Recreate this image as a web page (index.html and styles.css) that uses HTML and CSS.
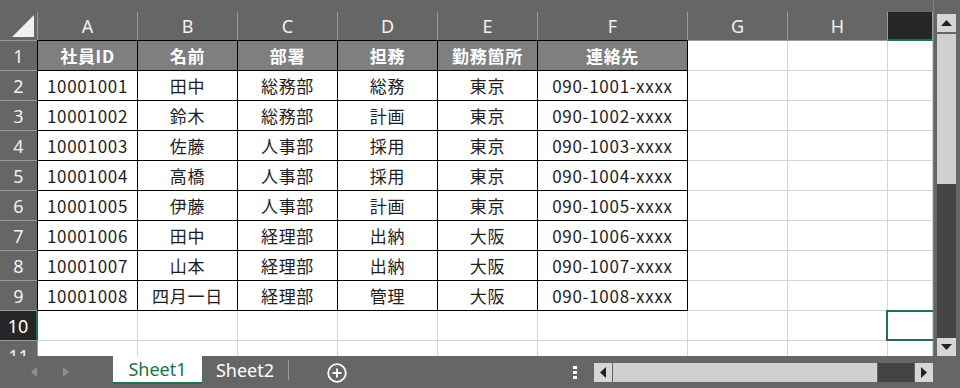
FILE: index.html
```html
<!DOCTYPE html>
<html lang="ja">
<head>
  <meta charset="UTF-8" />
  <title>Book1 - Excel</title>
  <link rel="stylesheet" href="styles.css">
</head>
<body>

<div class="excel">
  <div class="main">
    <div class="sheet">
      <!-- column headers -->
      <div class="corner"><svg width="22" height="22" viewBox="0 0 22 22"><polygon points="22,0 22,22 0,22" fill="#f0f0f0"/></svg></div>
      <div class="ch">A</div>
      <div class="ch">B</div>
      <div class="ch">C</div>
      <div class="ch">D</div>
      <div class="ch">E</div>
      <div class="ch">F</div>
      <div class="ch">G</div>
      <div class="ch">H</div>
      <div class="ch sel"></div>

      <div class="rh">1</div>
      <div class="cell t hd a">社員ID</div>
      <div class="cell t hd">名前</div>
      <div class="cell t hd">部署</div>
      <div class="cell t hd">担務</div>
      <div class="cell t hd">勤務箇所</div>
      <div class="cell t hd">連絡先</div>
      <div class="cell"></div>
      <div class="cell"></div>
      <div class="cell"></div>

      <div class="rh">2</div>
      <div class="cell t a">10001001</div>
      <div class="cell t">田中</div>
      <div class="cell t">総務部</div>
      <div class="cell t">総務</div>
      <div class="cell t">東京</div>
      <div class="cell t">090-1001-xxxx</div>
      <div class="cell"></div>
      <div class="cell"></div>
      <div class="cell"></div>

      <div class="rh">3</div>
      <div class="cell t a">10001002</div>
      <div class="cell t">鈴木</div>
      <div class="cell t">総務部</div>
      <div class="cell t">計画</div>
      <div class="cell t">東京</div>
      <div class="cell t">090-1002-xxxx</div>
      <div class="cell"></div>
      <div class="cell"></div>
      <div class="cell"></div>

      <div class="rh">4</div>
      <div class="cell t a">10001003</div>
      <div class="cell t">佐藤</div>
      <div class="cell t">人事部</div>
      <div class="cell t">採用</div>
      <div class="cell t">東京</div>
      <div class="cell t">090-1003-xxxx</div>
      <div class="cell"></div>
      <div class="cell"></div>
      <div class="cell"></div>

      <div class="rh">5</div>
      <div class="cell t a">10001004</div>
      <div class="cell t">高橋</div>
      <div class="cell t">人事部</div>
      <div class="cell t">採用</div>
      <div class="cell t">東京</div>
      <div class="cell t">090-1004-xxxx</div>
      <div class="cell"></div>
      <div class="cell"></div>
      <div class="cell"></div>

      <div class="rh">6</div>
      <div class="cell t a">10001005</div>
      <div class="cell t">伊藤</div>
      <div class="cell t">人事部</div>
      <div class="cell t">計画</div>
      <div class="cell t">東京</div>
      <div class="cell t">090-1005-xxxx</div>
      <div class="cell"></div>
      <div class="cell"></div>
      <div class="cell"></div>

      <div class="rh">7</div>
      <div class="cell t a">10001006</div>
      <div class="cell t">田中</div>
      <div class="cell t">経理部</div>
      <div class="cell t">出納</div>
      <div class="cell t">大阪</div>
      <div class="cell t">090-1006-xxxx</div>
      <div class="cell"></div>
      <div class="cell"></div>
      <div class="cell"></div>

      <div class="rh">8</div>
      <div class="cell t a">10001007</div>
      <div class="cell t">山本</div>
      <div class="cell t">経理部</div>
      <div class="cell t">出納</div>
      <div class="cell t">大阪</div>
      <div class="cell t">090-1007-xxxx</div>
      <div class="cell"></div>
      <div class="cell"></div>
      <div class="cell"></div>

      <div class="rh">9</div>
      <div class="cell t a">10001008</div>
      <div class="cell t">四月一日</div>
      <div class="cell t">経理部</div>
      <div class="cell t">管理</div>
      <div class="cell t">大阪</div>
      <div class="cell t">090-1008-xxxx</div>
      <div class="cell"></div>
      <div class="cell"></div>
      <div class="cell"></div>

      <div class="rh sel-row">10</div>
      <div class="cell"></div>
      <div class="cell"></div>
      <div class="cell"></div>
      <div class="cell"></div>
      <div class="cell"></div>
      <div class="cell"></div>
      <div class="cell"></div>
      <div class="cell"></div>
      <div class="cell active"></div>

      <div class="rh">11</div>
      <div class="cell"></div>
      <div class="cell"></div>
      <div class="cell"></div>
      <div class="cell"></div>
      <div class="cell"></div>
      <div class="cell"></div>
      <div class="cell"></div>
      <div class="cell"></div>
      <div class="cell"></div>
    </div>

    <div class="vscroll">
      <div class="sbtn"><svg width="11" height="6" viewBox="0 0 11 6"><polygon points="5.5,0 11,6 0,6" fill="#222"/></svg></div>
      <div class="vthumb"></div>
      <div class="vtrack"></div>
      <div class="sbtn"><svg width="11" height="6" viewBox="0 0 11 6"><polygon points="0,0 11,0 5.5,6" fill="#222"/></svg></div>
    </div>
  </div>

  <div class="tabbar">
    <div class="nav">
      <svg width="6" height="10" viewBox="0 0 6 10"><polygon points="6,0 6,10 0,5" fill="#8e8e8e"/></svg>
      <svg width="6" height="10" viewBox="0 0 6 10"><polygon points="0,0 0,10 6,5" fill="#8e8e8e"/></svg>
    </div>
    <div class="tab active">Sheet1</div>
    <div class="tab">Sheet2</div>
    <div class="sep"></div>
    <div class="add"><svg width="20" height="20" viewBox="0 0 20 20"><circle cx="10" cy="10" r="8.8" fill="none" stroke="#fff" stroke-width="1.8"/><path d="M10 5.5v9M5.5 10h9" stroke="#fff" stroke-width="1.8"/></svg></div>
    <div class="dots"><span></span><span></span><span></span></div>
    <div class="hscroll">
      <div class="hbtn"><svg width="6" height="11" viewBox="0 0 6 11"><polygon points="6,0 6,11 0,5.5" fill="#222"/></svg></div>
      <div class="hthumb"></div>
      <div class="htrack"></div>
      <div class="hbtn"><svg width="6" height="11" viewBox="0 0 6 11"><polygon points="0,0 0,11 6,5.5" fill="#222"/></svg></div>
    </div>
  </div>
</div>

</body>
</html>
```

FILE: styles.css
```css
body { margin: 0; background: #666; font-family: "Noto Sans", "Noto Sans CJK JP", sans-serif; }
.excel { width: 960px; height: 388px; overflow: hidden; background: #666; }
.main { display: flex; height: 356px; }

/* grid */
.sheet { width: 933px; height: 356px; box-sizing: border-box; padding-top: 12px; overflow: hidden; display: grid; grid-template-columns: 38px 100px 100px 100px 100px 100px 150px 100px 100px 45px; grid-template-rows: 29px; grid-auto-rows: 30px; }
.sheet > div { box-sizing: border-box; display: flex; align-items: center; justify-content: center; }

.corner { background: #666; border-right: 1px solid #9a9a9a; border-bottom: 1px solid #9a9a9a; justify-content: flex-end !important; align-items: flex-end !important; padding: 0 3px 3px 0; }
.ch { background: #666; color: #f2f2f2; font-size: 18px; border-right: 1px solid #9a9a9a; border-bottom: 1px solid #9a9a9a; }
.ch.sel { background: #262626; border-bottom: 2px solid #217346; }
.rh { background: #666; color: #f2f2f2; font-size: 18px; border-right: 1px solid #9a9a9a; border-bottom: 1px solid #9a9a9a; }
.rh.sel-row { background: #262626; color: #fff; border-right: 2px solid #217346; }

.cell { background: #fff; color: #1e1e1e; font-family: "Noto Sans CJK JP", sans-serif; font-size: 17px; border-right: 1px solid #d4d4d4; border-bottom: 1px solid #d4d4d4; }
.cell.t { border-right-color: #000; border-bottom-color: #000; letter-spacing: 0.7px; }
.cell.hd { background: #7f7f7f; color: #fff; font-weight: bold; box-shadow: 0 -1px 0 #000; }
.cell.a { box-shadow: -1px 0 0 #000; }
.cell.hd.a { box-shadow: 0 -1px 0 #000, -1px 0 0 #000, -1px -1px 0 #000; }
.cell.active { position: relative; }
.cell.active::after { content: ""; position: absolute; top: -1px; left: -2px; right: -10px; bottom: -1px; border: 2px solid #217346; }

/* vertical scrollbar */
.vscroll { width: 27px; box-sizing: border-box; border-left: 1px solid #7c7c7c; padding: 14px 4px 0 3px; display: flex; flex-direction: column; }
.sbtn { height: 18px; background: #d6d6d6; display: flex; align-items: center; justify-content: center; }
.vthumb { height: 150px; margin-top: 2px; background: #d0d0d0; }
.vtrack { flex: 1; background: #444; }

/* sheet tabs */
.tabbar { height: 32px; display: flex; align-items: flex-start; color: #fff; font-size: 18px; }
.nav { width: 113px; height: 32px; display: flex; align-items: center; gap: 26px; padding-left: 31px; box-sizing: border-box; }
.tab { width: 86px; height: 28px; display: flex; align-items: center; justify-content: center; }
.tab.active { width: 89px; box-sizing: border-box; background: #fff; color: #217346; border-bottom: 2px solid #217346; }
.sep { width: 1px; height: 20px; margin-top: 4px; background: #9a9a9a; }
.add { margin: 7px 0 0 38px; height: 20px; }
.dots { width: 4px; margin: 10px 0 0 226px; display: flex; flex-direction: column; gap: 2px; }
.dots span { width: 4px; height: 3px; background: #fff; }
.hscroll { width: 339px; height: 19px; margin: 7px 0 0 17px; display: flex; gap: 1px; }
.hbtn { width: 18px; background: #d6d6d6; display: flex; align-items: center; justify-content: center; }
.hthumb { width: 264px; background: #d0d0d0; }
.htrack { flex: 1; background: #444; }
```
